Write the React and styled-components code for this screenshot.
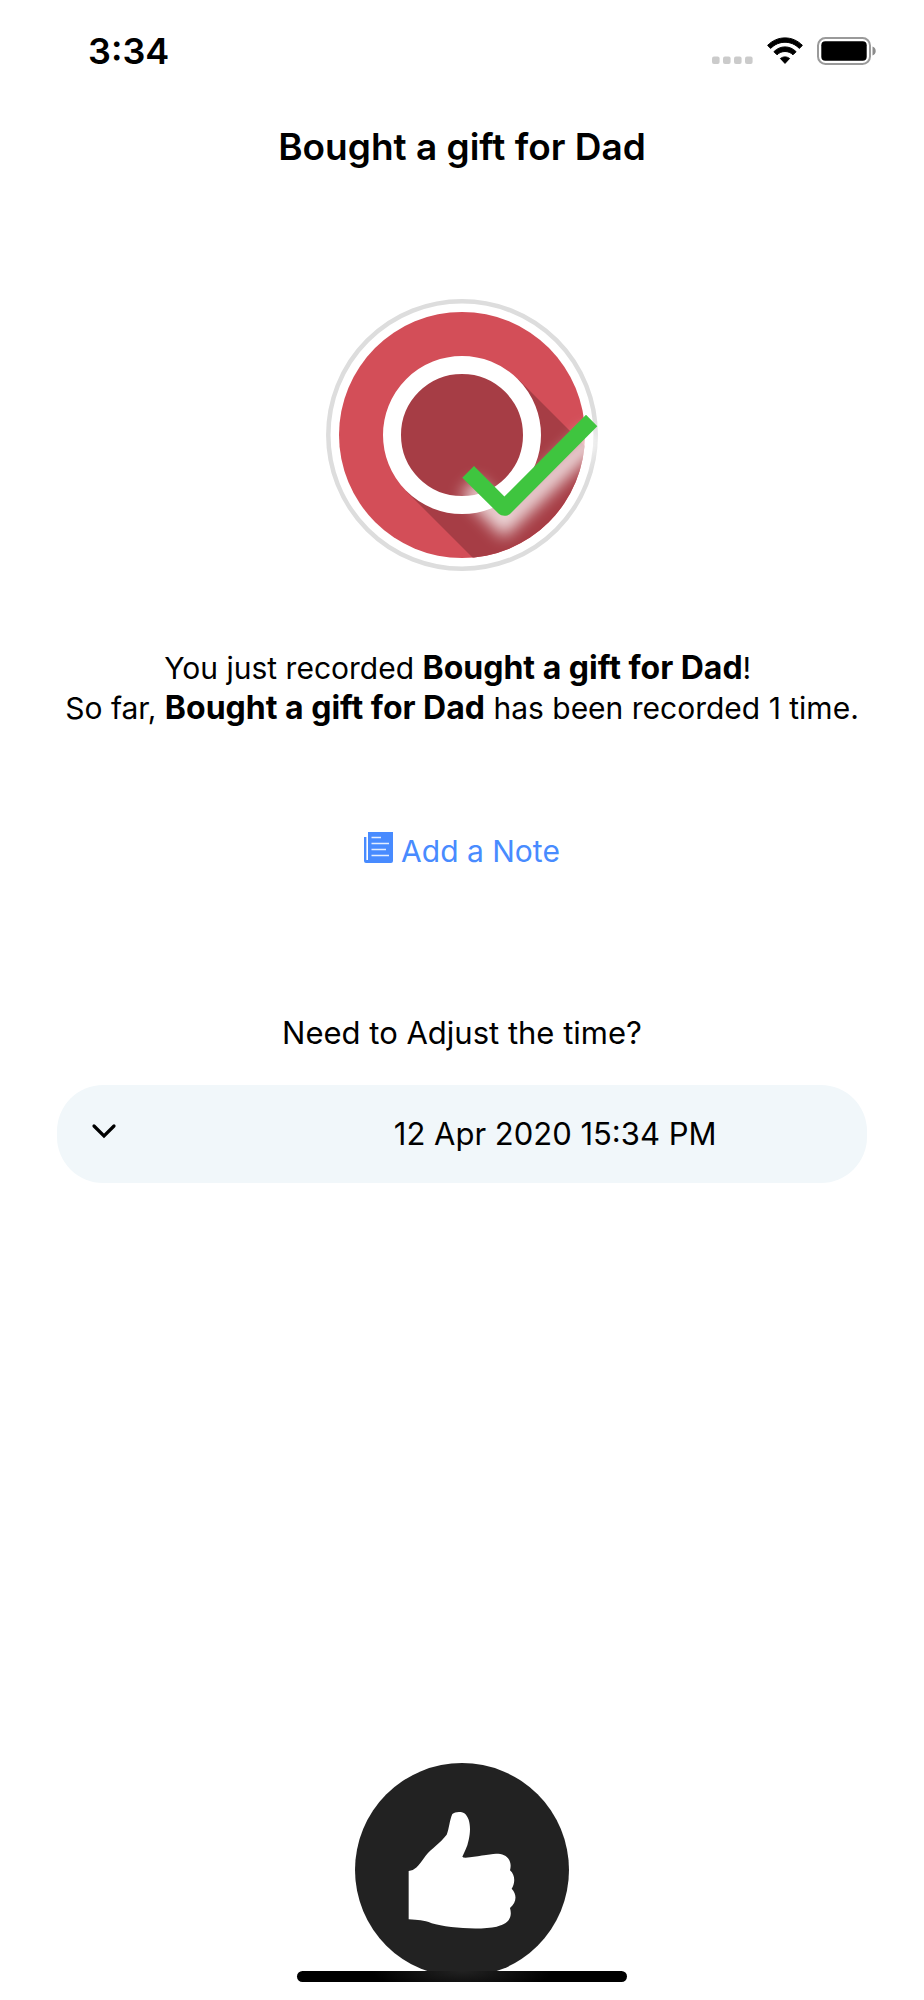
import React from 'react';
import styled, { createGlobalStyle } from 'styled-components';

const GlobalStyle = createGlobalStyle`
  * {
    box-sizing: border-box;
  }
  body {
    margin: 0;
    background: #fff;
    color: #000;
    font-family: Inter, "Liberation Sans", sans-serif;
  }
`

const Page = styled.div`
  display: flex;
  flex-direction: column;
  min-height: 100vh;
`
const StatusBar = styled.header`
  display: flex;
  justify-content: space-between;
  align-items: center;
  height: 101px;
  padding: 0 48px 0 88px;
`
const Clock = styled.span`
  font-size: 36px;
  line-height: 42px;
  font-weight: 600;
`
const StatusIcons = styled.div`
  display: flex;
  align-items: center;
  gap: 14px;
`
const Main = styled.main`
  display: flex;
  flex-direction: column;
  align-items: center;
`
const Title = styled.h1`
  margin: 0;
  padding: 24px 0;
  font-size: 37px;
  line-height: 44px;
  font-weight: 600;
  text-align: center;
`
const Badge = styled.div`
  display: flex;
  margin: 106px 0 77px;
`
const Summary = styled.p`
  margin: 0;
  font-size: 30px;
  line-height: 40px;
  text-align: center;
`
const EventName = styled.b`
  font-size: 32px;
  line-height: 1;
`
const NoteLink = styled.a`
  display: flex;
  align-items: flex-start;
  gap: 8px;
  margin-top: 103px;
  font-size: 30px;
  line-height: 40px;
  color: #488bff;
  text-decoration: none;
`
const TimeForm = styled.form`
  display: flex;
  flex-direction: column;
  align-items: stretch;
  gap: 32px;
  width: 100%;
  margin-top: 142px;
  padding: 0 57px;
`
const TimeLabel = styled.label`
  font-size: 31px;
  line-height: 40px;
  text-align: center;
`
const TimeField = styled.div`
  display: grid;
  align-items: center;
  border-radius: 46px;
  background: #f1f7fa;

  > * {
    grid-area: 1 / 1;
  }
`
const TimeSelect = styled.select`
  appearance: none;
  width: 100%;
  height: 98px;
  padding: 0 0 2px 23%;
  border: 0;
  border-radius: 46px;
  background: transparent;
  color: #000;
  font: inherit;
  font-size: 31px;
  text-align: center;
  text-align-last: center;
  cursor: pointer;
`
const Chevron = styled.svg`
  margin: 0 0 6px 33px;
  pointer-events: none;
`
const Footer = styled.footer`
  display: flex;
  flex-direction: column;
  align-items: center;
  margin-top: auto;
  padding-bottom: 18px;
`
const DoneButton = styled.button`
  display: flex;
  padding: 0;
  border: 0;
  border-radius: 50%;
  background: #222;
  cursor: pointer;
`
const HomeIndicator = styled.div`
  width: 330px;
  height: 11px;
  margin-top: -6px;
  border-radius: 6px;
  background: radial-gradient(ellipse 90px 22px at 50% 0, #222, #000);
`

const SignalDots = () => (
  <svg width="41" height="28" viewBox="0 0 41 28" fill="#cbcbcb" aria-hidden="true">
    {[0, 11, 22, 33].map(x => (
      <rect key={x} x={x} y="19.5" width="7.6" height="7.6" rx="2" />
    ))}
  </svg>
)

const WifiIcon = () => (
  <svg width="36" height="28" viewBox="0 0 36 28" aria-hidden="true">
    <path d="M0.6 8.4C10.2-1.6 25.8-1.6 35.4 8.4L32.3 11.4C24.4 3.2 11.6 3.2 3.7 11.4Z" stroke="#000" strokeWidth="1" strokeLinejoin="round" />
    <path d="M6.9 14.7C13 8.3 23 8.3 29.1 14.7L26 17.8C21.5 13.4 14.5 13.4 10 17.8Z" stroke="#000" strokeWidth="1" strokeLinejoin="round" />
    <path d="M13.4 21.5C16 19.4 20 19.4 22.6 21.5L18 26.4Z" stroke="#000" strokeWidth="1" strokeLinejoin="round" />
  </svg>
)

const BatteryIcon = () => (
  <svg width="59" height="28" viewBox="0 0 59 28" aria-hidden="true">
    <rect x="1" y="1" width="52" height="26" rx="7.5" fill="none" stroke="#9a9a9a" strokeWidth="2" />
    <rect x="4.3" y="4.3" width="45.4" height="19.4" rx="4" />
    <path d="M55.5 9.5C59.8 11 59.8 17 55.5 18.5Z" fill="#8c8c8c" />
  </svg>
)

const RecordedIcon = () => (
  <svg width="272" height="272" viewBox="0 0 272 272" role="img" aria-label="Recorded">
    <defs>
      <clipPath id="disc">
        <circle cx="136" cy="136" r="123" />
      </clipPath>
      <filter id="glow" x="-50%" y="-50%" width="200%" height="200%">
        <feGaussianBlur stdDeviation="8" />
      </filter>
    </defs>
    <circle cx="136" cy="136" r="133.7" fill="#fff" stroke="#ddd" strokeWidth="4.5" />
    <circle cx="136" cy="136" r="123" fill="#d34e58" />
    <path d="M192 80L292 180V292H180L80 192Z" fill="#a63d45" clipPath="url(#disc)" />
    <circle cx="136" cy="136" r="70" fill="#a63d45" stroke="#fff" strokeWidth="18" />
    <path d="M143 188L178 223L270 136" fill="none" stroke="#fff" strokeWidth="22" opacity="0.8" filter="url(#glow)" />
    <path d="M136.3 178.7L148 167L178.4 197.6L260 115.7L271.3 127.3L184.5 214.5C181 217.5 176 217.5 172.5 214.5Z" fill="#3fc53f" />
  </svg>
)

const NoteIcon = () => (
  <svg width="29" height="32" viewBox="0 -1 29 32" fill="#488bff" aria-hidden="true">
    <path d="M4 0H29V29Q29 31 27 31H2Q0 31 0 29V5H2V28H4Z" />
    <path d="M2 5H3V28H2Z" fill="#b9d2ff" />
    <path d="M7.5 5.5H17M7.5 11.5H25M7.5 17.5H22M7.5 23.5H25" stroke="#e4eeff" strokeWidth="1.4" />
  </svg>
)

const ThumbIcon = () => (
  <svg width="214" height="214" viewBox="225 39 642 642" fill="#fff" aria-hidden="true">
    <path d="M386 363C405 360 412 352 437 317C455 295 480 280 500 254C508 235 508 212 517 192C525 184 545 184 553 190C572 205 573 240 566 270C562 292 552 308 547 320Q549 325 570 322C600 317 640 311 655 311C680 312 698 332 690 361C706 375 706 398 695 416C711 432 711 458 690 474C697 500 690 520 650 530C600 541 500 534 455 520C430 509 415 511 386 508Z" />
  </svg>
)

class App extends React.Component {
  constructor(props) {
    super(props);
    this.onTimeChange = this.onTimeChange.bind(this);

    this.state = {
      time: '12 Apr 2020 15:34 PM'
    }
  }

  onTimeChange(event) {
    this.setState({time: event.target.value});
  }

  render() {
    const name = 'Bought a gift for Dad';

    return (
      <Page>
        <GlobalStyle />
        <StatusBar>
          <Clock>3:34</Clock>
          <StatusIcons>
            <SignalDots />
            <WifiIcon />
            <BatteryIcon />
          </StatusIcons>
        </StatusBar>

        <Main>
          <Title>{name}</Title>
          <Badge><RecordedIcon /></Badge>
          <Summary>
            You just recorded <EventName>{name}</EventName>!&nbsp;
            <br />
            So far, <EventName>{name}</EventName> has been recorded 1 time.
          </Summary>
          <NoteLink href="#note"><NoteIcon />Add a Note</NoteLink>
          <TimeForm>
            <TimeLabel htmlFor="time">Need to Adjust the time?</TimeLabel>
            <TimeField>
              <TimeSelect id="time" value={this.state.time} onChange={this.onTimeChange}>
                <option>12 Apr 2020 15:34 PM</option>
              </TimeSelect>
              <Chevron width="28" height="18" viewBox="0 0 28 18" fill="none" stroke="#000" strokeWidth="3.2" strokeLinecap="round" aria-hidden="true">
                <path d="M4 4L14 14L24 4" />
              </Chevron>
            </TimeField>
          </TimeForm>
        </Main>

        <Footer>
          <DoneButton type="button" aria-label="Done"><ThumbIcon /></DoneButton>
          <HomeIndicator />
        </Footer>
      </Page>
    );
  }
};

export default App;
